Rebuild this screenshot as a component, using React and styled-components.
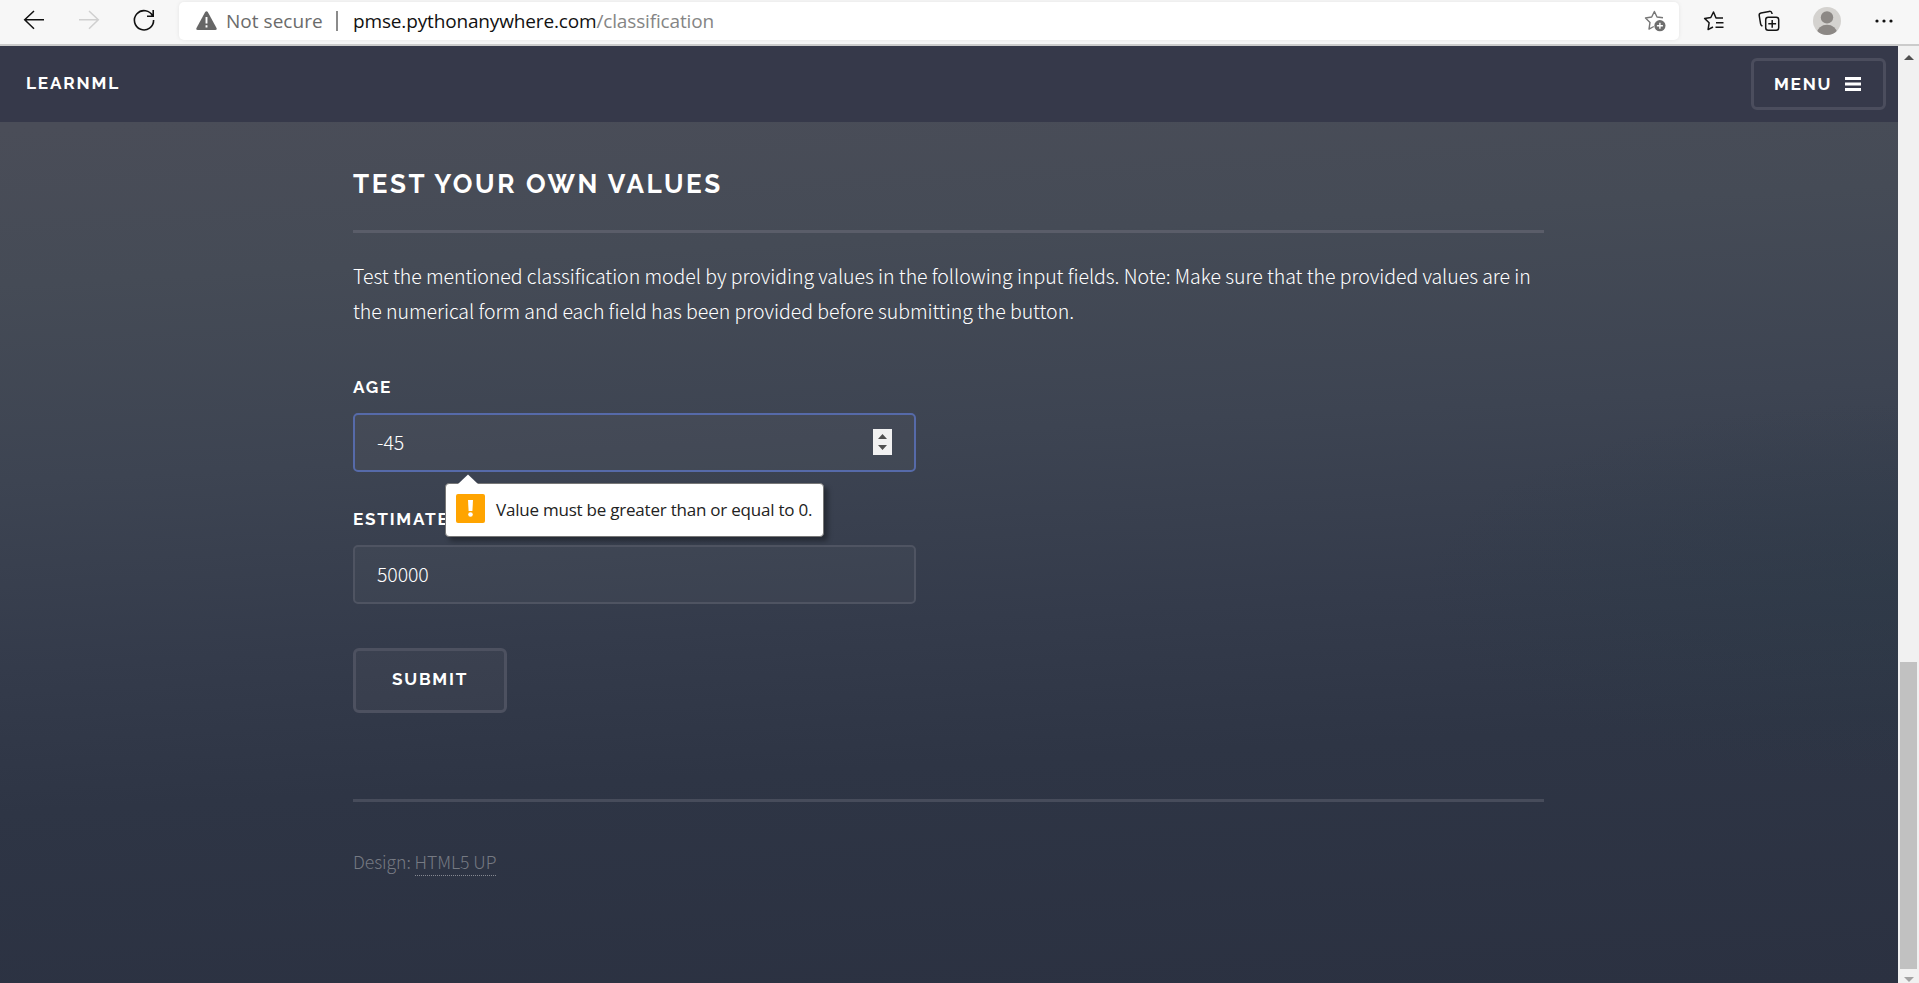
import React from 'react';
import styled, { createGlobalStyle } from 'styled-components';

const heading = `"Raleway", "Lato", "Open Sans", sans-serif`;
const body = `"Source Sans Pro", "Noto Sans CJK SC", "Noto Sans", sans-serif`;
const system = `"Segoe UI", "Open Sans", "Noto Sans", sans-serif`;

const GlobalStyle = createGlobalStyle`
  *, *::before, *::after { box-sizing: border-box; }
  html, body { margin: 0; padding: 0; overflow: hidden; }
  h2, p { margin: 0; }
`;

const Window = styled.div`
  width: 1919px;
  height: 983px;
  display: flex;
  flex-direction: column;
  overflow: hidden;
`;

const Toolbar = styled.div`
  height: 46px;
  flex: none;
  display: flex;
  align-items: flex-start;
  background: #f7f7f7;
  border-bottom: 2px solid #cbcbcb;
`;

const NavIcons = styled.div`
  display: flex;
  width: 179px;
  padding: 8px 0 0 22px;
  gap: 31px;
`;

const AddressBar = styled.div`
  width: 1500px;
  height: 38px;
  margin-top: 2px;
  display: flex;
  align-items: center;
  padding: 0 12px 0 17px;
  background: #fff;
  border-radius: 5px;
  box-shadow: 0 0 4px rgba(0, 0, 0, 0.08);
  font: 400 19px/38px ${system};
  color: #6b6b6b;
  white-space: pre;
`;

const Security = styled.span`
  width: 95px;
  margin-left: 9px;
  letter-spacing: 0.03px;
`;

const Divider = styled.i`
  width: 2px;
  height: 20px;
  margin: -1px 15px 0;
  background: #8b8b8b;
`;

const Url = styled.span`
  flex: 1;
  letter-spacing: -0.15px;
  color: #858585;
  b { font-weight: 400; color: #111; }
`;

const Actions = styled.div`
  display: flex;
  align-items: center;
  height: 41px;
  padding-left: 24px;
`;

const IconPair = styled.div`
  display: flex;
  gap: 33px;
`;

const Avatar = styled.svg`
  margin: 0 34px 0 33px;
`;

const Viewport = styled.div`
  flex: 1;
  display: flex;
  min-height: 0;
`;

const Page = styled.div`
  width: 1898px;
  display: flex;
  flex-direction: column;
  background:
    radial-gradient(ellipse 480px 190px at 1898px 545px, rgba(42, 58, 70, 0.4), rgba(42, 58, 70, 0.2) 55%, transparent),
    linear-gradient(177deg, #4a4d58 8%, #454b56 23%, #3d4452 42%, #343b4b 60%, #2e3545 74%, #2b3141 100%);
`;

const Header = styled.header`
  height: 76px;
  flex: none;
  display: flex;
  align-items: center;
  justify-content: space-between;
  padding: 0 12px 0 26px;
  background: #36394a;
  color: #fff;
  font: 700 17.2px/20px ${heading};
`;

const Brand = styled.span`
  letter-spacing: 1.8px;
  margin-top: -2px;
`;

const MenuButton = styled.button`
  width: 135px;
  height: 52px;
  padding: 0 22px 0 20px;
  display: flex;
  align-items: center;
  justify-content: space-between;
  background: transparent;
  border: 3px solid #4b4d5d;
  border-radius: 6px;
  color: #fff;
  font: 700 17.2px/20px ${heading};
  letter-spacing: 1.72px;
`;

const Content = styled.main`
  width: 1191px;
  margin-left: 353px;
  display: flex;
  flex-direction: column;
  color: #fff;
`;

const Title = styled.h2`
  height: 111px;
  padding-top: 42px;
  border-bottom: 3px solid #5a5d69;
  font: 700 26px/40px ${heading};
  letter-spacing: 2.6px;
`;

const Lead = styled.p`
  margin-top: 25px;
  height: 110px;
  font: 300 19.5px/35px ${body};
  letter-spacing: -0.04px;
  white-space: nowrap;
`;

const Form = styled.form`
  display: flex;
  flex-direction: column;
  align-items: flex-start;
`;

const Field = styled.div`
  position: relative;
  width: 563px;
  height: 132px;
  padding-top: 9px;
`;

const Label = styled.label`
  display: block;
  height: 36px;
  font: 700 17.2px/20px ${heading};
  letter-spacing: 1.72px;
`;

const InputBox = styled.div`
  display: flex;
  align-items: center;
  justify-content: space-between;
  height: 59px;
  padding: 0 22px 2px;
  background: rgba(144, 144, 144, 0.075);
  border: 2px solid ${(p) => (p.$focused ? '#566aa9' : '#4f5462')};
  border-radius: 5px;
`;

const Input = styled.input`
  width: 400px;
  padding: 0;
  border: 0;
  outline: 0;
  background: transparent;
  color: #fff;
  font: 300 19.5px/34px ${body};
  letter-spacing: -0.1px;
`;

const Tooltip = styled.div`
  position: absolute;
  z-index: 1;
  left: 92px;
  top: 115px;
  width: 379px;
  height: 54px;
  display: flex;
  align-items: center;
  gap: 11px;
  padding: 0 10px;
  background: #fff;
  border: 1px solid #777;
  border-radius: 4px;
  box-shadow: 4px 4px 5px rgba(0, 0, 0, 0.35);
  color: #222;
  font: 400 17px/24px ${system};
  white-space: nowrap;
`;

const Pointer = styled.svg`
  position: absolute;
  left: 11px;
  top: -10px;
`;

const WarnBadge = styled.svg`
  flex: none;
  margin-top: -3px;
`;

const TooltipText = styled.span`
  letter-spacing: -0.22px;
`;

const Submit = styled.button`
  width: 154px;
  height: 65px;
  margin-top: 16px;
  padding: 0 0 3px;
  background: rgba(144, 144, 144, 0.075);
  border: 3px solid #4d5160;
  border-radius: 6px;
  color: #fff;
  font: 700 17.2px/20px ${heading};
  letter-spacing: 1.76px;
`;

const Footer = styled.footer`
  margin-top: 86px;
  padding-top: 43px;
  border-top: 3px solid #474c5b;
  color: #767a83;
  font: 300 17.6px/34px ${body};
  letter-spacing: -0.06px;
`;

const FooterLink = styled.span`
  display: inline-block;
  height: 31px;
  border-bottom: 1px dotted #858891;
`;

const Scrollbar = styled.div`
  width: 21px;
  display: flex;
  flex-direction: column;
  align-items: center;
  padding-top: 9px;
  background: #f1f1f1;
`;

const Thumb = styled.div`
  width: 17px;
  height: 307px;
  margin: 602px 0 8px;
  background: #c1c1c1;
`;

function BackIcon({ color = '#111', flip }) {
  return (
    <svg width="24" height="24" viewBox="0 0 24 24" fill="none" stroke={color} strokeWidth="1.5" transform={flip ? 'scale(-1 1)' : undefined}>
      <path d="M12 3 2.7 11.8 12 20.7M2.7 11.8H22" />
    </svg>
  );
}

function ReloadIcon() {
  return (
    <svg width="24" height="24" viewBox="0 0 24 24" fill="none" stroke="#111" strokeWidth="1.6">
      <path d="M20.7 8.2A9.6 9.6 0 1 0 21.6 12M21.2 2v6.2H15" />
    </svg>
  );
}

function WarningIcon() {
  return (
    <svg width="21" height="20" viewBox="0 0 21 20">
      <path d="M9.2 1.1Q10.5-.7 11.8 1.1L20.5 17Q21.3 19 19.2 19H1.8Q-.3 19 .5 17Z" fill="#666" />
      <path d="M10.5 6v6.4M10.5 14.2v2.2" stroke="#fff" strokeWidth="1.9" />
    </svg>
  );
}

function AddFavoriteIcon() {
  return (
    <svg width="23" height="23" viewBox="0 0 23 23" fill="none" stroke="#777" strokeWidth="1.4">
      <path d="M19 7.8 13 7 10.4 1.5 7.7 7 1.5 8l4.5 4.4L5 19.1l4.8-2.6" strokeLinejoin="round" />
      <circle cx="15.9" cy="15.7" r="5.6" fill="#6e6e6e" stroke="none" />
      <path d="M15.9 12.7v6M12.9 15.7h6" stroke="#fff" />
    </svg>
  );
}

function FavoritesIcon() {
  return (
    <svg width="22" height="22" viewBox="0 0 22 22" fill="none" stroke="#151515" strokeWidth="1.5" strokeLinejoin="round">
      <path d="M20 8h-7L10.5 2 7.8 7.500 1.600 8.400 6.100 12.800 5.100 19.600 10 17M13 12.800h7.500M12.500 17.200h8" />
    </svg>
  );
}

function CollectionsIcon() {
  return (
    <svg width="22" height="22" viewBox="0 0 22 22" fill="none" stroke="#151515" strokeWidth="1.5">
      <path d="M4.500 16.200 3.600 15.600Q2.800 15 2.600 13.800L1.200 5.500Q1 3.400 3 3L11.200 1.400Q13.400 1 14 3.400V4" />
      <rect x="7.7" y="7.3" width="13" height="13" rx="2.5" />
      <path d="M14.200 10v7.800M10.300 13.800h7.800" />
    </svg>
  );
}

export default function App() {
  return (
    <Window>
      <GlobalStyle />
      <Toolbar>
        <NavIcons>
          <BackIcon />
          <BackIcon color="#d0d0d0" flip />
          <ReloadIcon />
        </NavIcons>
        <AddressBar>
          <WarningIcon />
          <Security>Not secure</Security>
          <Divider />
          <Url><b>pmse.pythonanywhere.com</b>/classification</Url>
          <AddFavoriteIcon />
        </AddressBar>
        <Actions>
          <IconPair>
            <FavoritesIcon />
            <CollectionsIcon />
          </IconPair>
          <Avatar width="28" height="28" viewBox="0 0 28 28">
            <clipPath id="disc"><circle cx="14" cy="14" r="14" /></clipPath>
            <g clipPath="url(#disc)">
              <rect width="28" height="28" fill="#d4d2cf" />
              <circle cx="14" cy="10.4" r="6.2" fill="#8c8885" />
              <ellipse cx="14" cy="26" rx="10" ry="8.2" fill="#8c8885" />
            </g>
          </Avatar>
          <svg width="18" height="4" viewBox="0 0 18 4" fill="#111">
            <circle cx="2" cy="2" r="1.6" /><circle cx="9" cy="2" r="1.6" /><circle cx="16" cy="2" r="1.6" />
          </svg>
        </Actions>
      </Toolbar>
      <Viewport>
        <Page>
          <Header>
            <Brand>LEARNML</Brand>
            <MenuButton>
              MENU
              <svg width="16" height="14" viewBox="0 0 16 14" fill="#fff">
                <path d="M0 0h16v3H0zM0 5.5h16v3H0zM0 11h16v3H0z" />
              </svg>
            </MenuButton>
          </Header>
          <Content>
            <Title>TEST YOUR OWN VALUES</Title>
            <Lead>
              Test the mentioned classification model by providing values in the following input fields. Note: Make sure that the provided values are in
              <br />
              the numerical form and each field has been provided before submitting the button.
            </Lead>
            <Form>
              <Field>
                <Label>AGE</Label>
                <InputBox $focused>
                  <Input defaultValue="-45" />
                  <svg width="19" height="26" viewBox="0 0 19 26">
                    <rect width="19" height="26" fill="#f1f1f1" />
                    <path d="M5 10h9L9.5 5zM5 16h9l-4.500 5z" fill="#505050" />
                  </svg>
                </InputBox>
                <Tooltip>
                  <Pointer width="22" height="11" viewBox="0 0 22 11">
                    <path d="M1 10 11 .6 21 10v1H1z" fill="#fff" />
                  </Pointer>
                  <WarnBadge width="29" height="29" viewBox="0 0 29 29">
                    <rect width="29" height="29" rx="2" fill="#ffa400" />
                    <path d="M12 6h5l-.6 11h-3.800z" fill="#fff" />
                    <circle cx="14.500" cy="20.500" r="2.300" fill="#fff" />
                  </WarnBadge>
                  <TooltipText>Value must be greater than or equal to 0.</TooltipText>
                </Tooltip>
              </Field>
              <Field>
                <Label>ESTIMATED SALARY</Label>
                <InputBox>
                  <Input defaultValue="50000" />
                </InputBox>
              </Field>
              <Submit type="button">SUBMIT</Submit>
            </Form>
            <Footer>Design: <FooterLink>HTML5 UP</FooterLink></Footer>
          </Content>
        </Page>
        <Scrollbar>
          <svg width="10" height="5" viewBox="0 0 10 5"><path d="M0 5h10L5 0z" fill="#505050" /></svg>
          <Thumb />
          <svg width="10" height="5" viewBox="0 0 10 5"><path d="M0 0h10L5 5z" fill="#a3a3a3" /></svg>
        </Scrollbar>
      </Viewport>
    </Window>
  );
}
